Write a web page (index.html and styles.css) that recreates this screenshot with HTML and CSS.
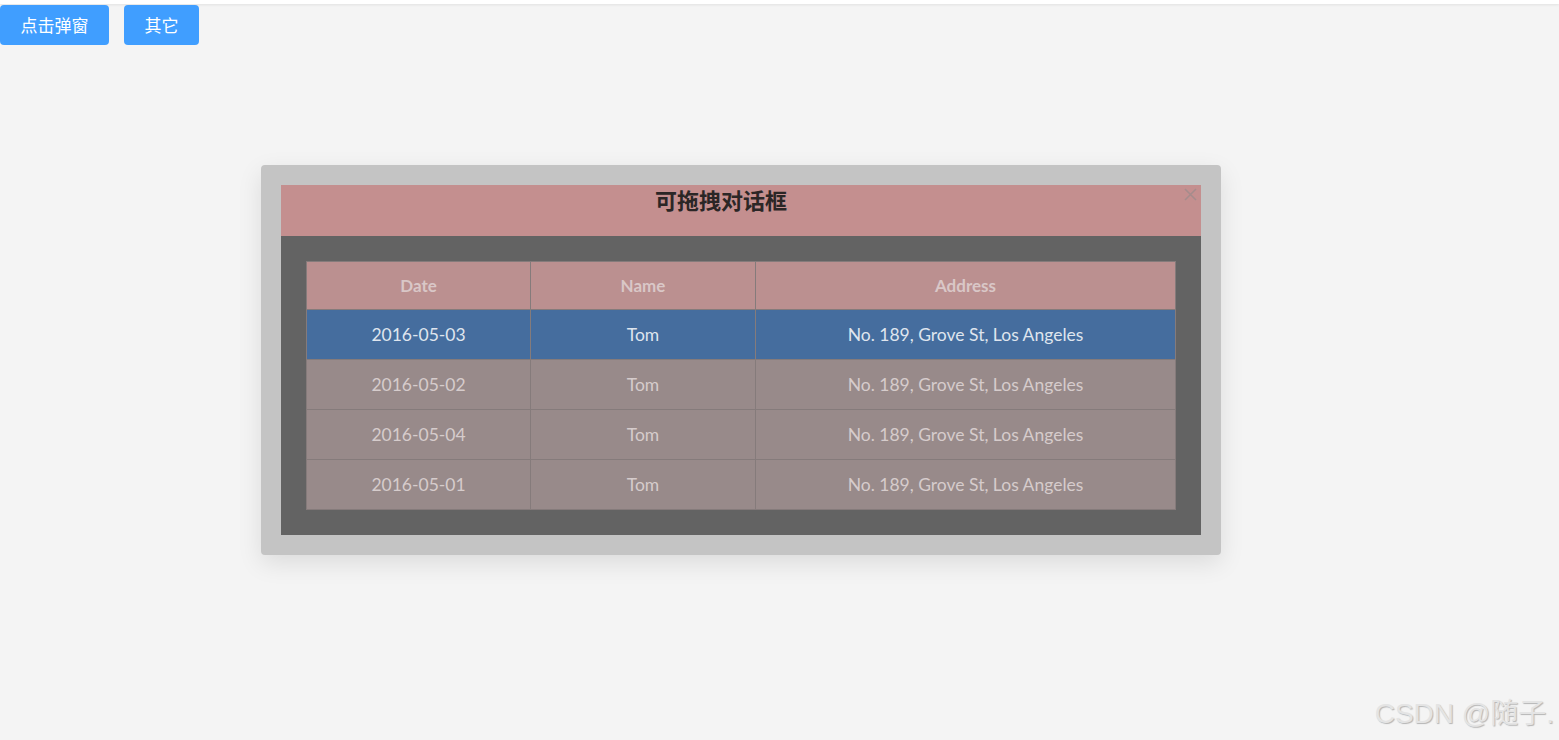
FILE: index.html
```html
<!DOCTYPE html>
<html lang="zh">
<head>
<meta charset="utf-8">
<title>可拖拽对话框</title>
<link rel="stylesheet" href="styles.css">
</head>
<body>
<div class="topbar"></div>
<div class="toolbar">
  <button class="btn">点击弹窗</button>
  <button class="btn">其它</button>
</div>

<div class="dialog">
  <div class="dialog-inner">
    <div class="dialog-header">
      <span class="dialog-title">可拖拽对话框</span>
      <span class="dialog-close">
        <svg width="13" height="13" viewBox="0 0 13 13"><path d="M1 1L12 12M12 1L1 12" stroke="currentColor" stroke-width="1.5" fill="none"/></svg>
      </span>
    </div>
    <div class="dialog-body">
      <table class="table">
        <thead>
          <tr><th class="c1">Date</th><th class="c2">Name</th><th>Address</th></tr>
        </thead>
        <tbody>
          <tr class="current"><td>2016-05-03</td><td>Tom</td><td>No. 189, Grove St, Los Angeles</td></tr>
          <tr><td>2016-05-02</td><td>Tom</td><td>No. 189, Grove St, Los Angeles</td></tr>
          <tr><td>2016-05-04</td><td>Tom</td><td>No. 189, Grove St, Los Angeles</td></tr>
          <tr><td>2016-05-01</td><td>Tom</td><td>No. 189, Grove St, Los Angeles</td></tr>
        </tbody>
      </table>
    </div>
  </div>
</div>

<div class="watermark">CSDN @随子.</div>
</body>
</html>
```

FILE: styles.css
```css
html, body {
  margin: 0;
  padding: 0;
  height: 100%;
}
body {
  background: #f4f4f4;
  font-family: "Lato", "Noto Sans CJK SC", sans-serif;
  position: relative;
  overflow: hidden;
}
.topbar {
  height: 4px;
  background: #ffffff;
  box-shadow: 0 1px 3px rgba(0,0,0,0.08);
}
.toolbar {
  display: flex;
  gap: 15px;
  margin-top: 1px;
}
.btn {
  height: 40px;
  padding: 0 20.5px;
  border: none;
  border-radius: 4px;
  background: #409eff;
  color: #ffffff;
  font-family: "Noto Sans CJK SC", sans-serif;
  font-size: 17px;
  line-height: 40px;
}
.dialog {
  position: absolute;
  left: 261px;
  top: 165px;
  width: 960px;
  box-sizing: border-box;
  padding: 20px;
  background: #c4c4c4;
  border-radius: 4px;
  box-shadow: 0 8px 24px rgba(0,0,0,0.10);
}
.dialog-header {
  position: relative;
  height: 51px;
  background: #c48f8f;
  text-align: center;
  box-sizing: border-box;
  padding: 1px 40px 0 0;
}
.dialog-title {
  font-family: "Noto Sans CJK SC", sans-serif;
  font-size: 22px;
  font-weight: 700;
  line-height: 26px;
  color: #2b2626;
}
.dialog-close {
  position: absolute;
  right: 4px;
  top: 3px;
  color: #a58c8c;
  display: flex;
}
.dialog-body {
  background: #636363;
  padding: 25px;
}
.table {
  width: 100%;
  border-collapse: collapse;
  table-layout: fixed;
  border: 1px solid #8b8080;
  font-size: 17.5px;
  text-align: center;
}
.table th, .table td {
  padding: 0;
  border: 1px solid #857b7b;
}
.table th {
  height: 47px;
  background: #bb9090;
  color: #d9c7c7;
  font-weight: 700;
  font-size: 17px;
}
.table th.c1 { width: 223px; }
.table th.c2 { width: 224px; }
.table td {
  height: 49px;
  background: #988a8a;
  color: #d6cccc;
}
.table tr.current td {
  background: #456d9e;
  color: #dfe5ee;
}
.watermark {
  position: absolute;
  right: 5px;
  bottom: 9px;
  font-family: "Liberation Sans", "Noto Sans CJK SC", sans-serif;
  font-size: 28px;
  color: #e4e4e4;
  text-shadow: 1px 1px 1px #b5b5b5;
}
```
